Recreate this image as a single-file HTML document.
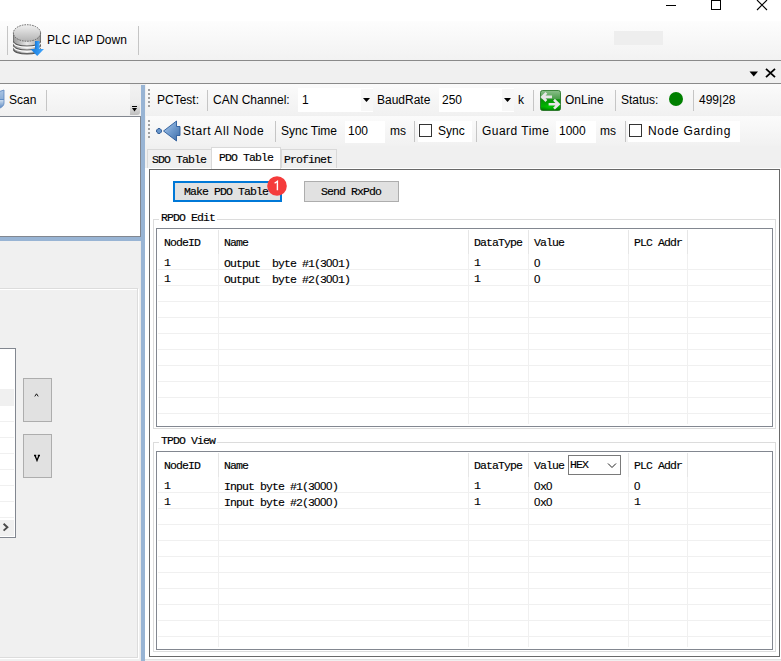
<!DOCTYPE html>
<html><head><meta charset="utf-8">
<style>
*{margin:0;padding:0;box-sizing:border-box}
html,body{width:781px;height:661px;overflow:hidden;background:#f0f0f0;position:relative;font-family:"Liberation Sans",sans-serif;font-size:12px;color:#000}
.a{position:absolute}
.t{position:absolute;white-space:nowrap;font-family:"Liberation Sans",sans-serif;font-size:12px;line-height:14px;color:#000}
.m{position:absolute;white-space:nowrap;font-family:"Liberation Mono",monospace;font-size:11.5px;letter-spacing:-0.9px;line-height:14px;color:#000;-webkit-text-stroke:0.15px #000}
.sep{position:absolute;width:1px;background:#c5c5c5}
.grip{position:absolute;width:2px;background:repeating-linear-gradient(to bottom,#a0a0a0 0,#a0a0a0 2px,transparent 2px,transparent 4px)}
.gl{position:absolute;background:#f0f0f0}
.z{font-family:"Liberation Sans",sans-serif;letter-spacing:-0.39px}
</style></head><body>

<!-- title bar -->
<div class="a" style="left:0;top:0;width:781px;height:21px;background:#fff"></div>
<div class="a" style="left:666px;top:5px;width:10px;height:1px;background:#000"></div>
<div class="a" style="left:711px;top:0;width:10px;height:10px;border:1px solid #000"></div>
<svg class="a" style="left:756px;top:-1px" width="12" height="12" viewBox="0 0 12 12"><path d="M1 1L11 11M11 1L1 11" stroke="#000" stroke-width="1.1"/></svg>

<!-- ribbon -->
<div class="a" style="left:0;top:21px;width:781px;height:39px;background:linear-gradient(#fdfdfd,#f2f2f2)"></div>
<div class="sep" style="left:7px;top:26px;height:29px"></div>
<div class="sep" style="left:138px;top:26px;height:29px"></div>
<div class="a" style="left:614px;top:31px;width:49px;height:14px;background:#eeeeee"></div>
<svg class="a" style="left:12px;top:24px" width="33" height="33" viewBox="0 0 33 33">
 <defs>
  <linearGradient id="dbg" x1="0" y1="0" x2="0" y2="1"><stop offset="0" stop-color="#f0f0f0"/><stop offset="1" stop-color="#b4b4b4"/></linearGradient>
  <linearGradient id="dbs" x1="0" y1="0" x2="1" y2="0"><stop offset="0" stop-color="#9a9a9a"/><stop offset="0.5" stop-color="#e8e8e8"/><stop offset="1" stop-color="#9a9a9a"/></linearGradient>
  <linearGradient id="arr" x1="0" y1="0" x2="1" y2="0"><stop offset="0" stop-color="#1578d8"/><stop offset="1" stop-color="#44a8ff"/></linearGradient>
 </defs>
 <path d="M1.5 9V25A13.5 4.5 0 0 0 28.5 25V9Z" fill="url(#dbs)" stroke="#6a6a6a" stroke-width="0.9"/>
 <path d="M1.5 17.5A13.5 4.5 0 0 0 28.5 17.5" fill="none" stroke="#505050" stroke-width="1.1"/>
 <path d="M1.5 18.8A13.5 4.5 0 0 0 28.5 18.8" fill="none" stroke="#fff" stroke-width="1.1"/>
 <path d="M1.5 21.5A13.5 4.5 0 0 0 28.5 21.5" fill="none" stroke="#505050" stroke-width="1.1"/>
 <path d="M1.5 22.8A13.5 4.5 0 0 0 28.5 22.8" fill="none" stroke="#fff" stroke-width="1.1"/>
 <path d="M1.5 25.5A13.5 4.5 0 0 0 28.5 25.5" fill="none" stroke="#505050" stroke-width="1.1"/>
 <ellipse cx="15" cy="9" rx="13.6" ry="8.3" fill="url(#dbg)" stroke="#5a5a5a" stroke-width="0.9" stroke-dasharray="1.6 1"/>
 <rect x="23" y="17" width="4.5" height="8.5" fill="url(#arr)"/>
 <path d="M18.5 25H32L25.2 32Z" fill="url(#arr)"/>
</svg>
<div class="t" style="left:47px;top:33px">PLC IAP Down</div>

<div class="a" style="left:0;top:60px;width:781px;height:1px;background:#8a8a8a"></div>
<svg class="a" style="left:749px;top:71px" width="10" height="6" viewBox="0 0 10 6"><path d="M0.5 0.5H9L4.75 5.5Z" fill="#000"/></svg>
<svg class="a" style="left:765px;top:68px" width="11" height="10" viewBox="0 0 11 10"><path d="M1 0.8L10 9.2M10 0.8L1 9.2" stroke="#000" stroke-width="1.8"/></svg>
<div class="a" style="left:0;top:83px;width:781px;height:1px;background:#8a8a8a"></div>

<!-- LEFT PANEL -->
<div class="a" style="left:0;top:84px;width:130px;height:31px;background:linear-gradient(#fbfbfb,#f1f1f1);border-radius:0 0 3px 0"></div>
<div class="a" style="left:130px;top:86px;width:10px;height:29px;background:linear-gradient(#f2f2f2 0,#ececec 60%,#bdbdbd 100%);border-radius:0 0 3px 0"></div>
<div class="a" style="left:132px;top:106px;width:5px;height:1px;background:#000"></div>
<svg class="a" style="left:132px;top:108px" width="6" height="4" viewBox="0 0 6 4"><path d="M0 0H5L2.5 3.5Z" fill="#000"/></svg>
<svg class="a" style="left:-12px;top:89px" width="17" height="21" viewBox="0 0 17 21">
 <defs><linearGradient id="sh" x1="0" y1="0" x2="0" y2="1"><stop offset="0" stop-color="#a9c4e4"/><stop offset="0.45" stop-color="#8eb0d8"/><stop offset="0.5" stop-color="#d6e4f2"/><stop offset="1" stop-color="#4d7dbc"/></linearGradient></defs>
 <path d="M1 6L16 1V14C16 17 13 19.5 8 20C4 19 1 16 1 13Z" fill="url(#sh)" stroke="#5a86c0" stroke-width="0.8"/>
 <path d="M1 10.5H16" stroke="#5f8cc4" stroke-width="1"/>
</svg>
<div class="t" style="left:9px;top:93px">Scan</div>
<div class="sep" style="left:46px;top:90px;height:21px"></div>

<div class="a" style="left:0;top:116px;width:141px;height:121px;background:#fff;border-top:1px solid #828790;border-right:1px solid #828790;border-bottom:1px solid #828790"></div>
<div class="a" style="left:0;top:237px;width:141px;height:4px;background:#98b4d4"></div>
<div class="a" style="left:141px;top:85px;width:4px;height:576px;background:#98b4d4"></div>
<div class="a" style="left:140px;top:241px;width:1px;height:420px;background:#e9e9e9"></div>

<!-- left groupbox -->
<div class="a" style="left:-2px;top:288px;width:140px;height:370px;border:1px solid #dcdcdc;box-shadow:1px 1px 0 #fff, inset 1px 1px 0 #fff"></div>
<!-- left grid -->
<div class="a" style="left:0;top:348px;width:16px;height:190px;background:#fff;border:1px solid #828790;border-left:none"></div>
<div class="a" style="left:0;top:389px;width:14px;height:17px;background:#f0f0f0"></div>
<div class="gl" style="left:0;top:421px;width:14px;height:1px"></div>
<div class="gl" style="left:0;top:437px;width:14px;height:1px"></div>
<div class="gl" style="left:0;top:453px;width:14px;height:1px"></div>
<div class="gl" style="left:0;top:469px;width:14px;height:1px"></div>
<div class="gl" style="left:0;top:485px;width:14px;height:1px"></div>
<div class="gl" style="left:0;top:501px;width:14px;height:1px"></div>
<div class="gl" style="left:0;top:517px;width:14px;height:1px"></div>
<div class="a" style="left:0;top:520px;width:14px;height:16px;background:#f0f0f0"></div>
<svg class="a" style="left:2px;top:522px" width="8" height="10" viewBox="0 0 8 10"><path d="M1.6 1.8L5.4 5.2L1.6 8.6" stroke="#4a4a4a" stroke-width="1.9" fill="none"/></svg>
<!-- up/down buttons -->
<div class="a" style="left:23px;top:378px;width:29px;height:44px;background:#e1e1e1;border:1px solid #adadad"></div>
<svg class="a" style="left:33px;top:392px" width="7" height="6" viewBox="0 0 7 6"><path d="M1.8 4.4L3.5 1.8L5.2 4.4" stroke="#000" stroke-width="0.9" fill="none"/></svg>
<div class="a" style="left:23px;top:434px;width:29px;height:44px;background:#e1e1e1;border:1px solid #adadad"></div>
<svg class="a" style="left:33px;top:454px" width="8" height="8" viewBox="0 0 8 8"><path d="M1 1.5H3.2M4.8 1.5H7M2 1.5L4 6.5L6 1.5" stroke="#000" stroke-width="1.3" fill="none"/></svg>

<!-- RIGHT PANEL toolbars -->
<div class="a" style="left:146px;top:84px;width:635px;height:31px;background:linear-gradient(#fbfbfb,#f1f1f1);border-radius:0 0 0 3px"></div>
<div class="a" style="left:146px;top:116px;width:635px;height:30px;background:linear-gradient(#fbfbfb,#f1f1f1);border-radius:0 0 0 3px"></div>
<div class="grip" style="left:148px;top:89px;height:18px"></div>
<div class="grip" style="left:148px;top:120px;height:18px"></div>

<div class="t" style="left:157px;top:93px">PCTest:</div>
<div class="sep" style="left:207px;top:90px;height:21px"></div>
<div class="t" style="left:213px;top:93px">CAN Channel:</div>
<div class="a" style="left:298px;top:88px;width:75px;height:24px;background:#fff"></div>
<div class="a" style="left:361px;top:89px;width:12px;height:22px;background:#f7f7f7"></div>
<svg class="a" style="left:363px;top:98px" width="7" height="4" viewBox="0 0 7 4"><path d="M0 0H7L3.5 4Z" fill="#000"/></svg>
<div class="t" style="left:302px;top:93px">1</div>
<div class="t" style="left:377px;top:93px">BaudRate</div>
<div class="a" style="left:439px;top:88px;width:75px;height:24px;background:#fff"></div>
<div class="a" style="left:502px;top:89px;width:12px;height:22px;background:#f7f7f7"></div>
<svg class="a" style="left:504px;top:98px" width="7" height="4" viewBox="0 0 7 4"><path d="M0 0H7L3.5 4Z" fill="#000"/></svg>
<div class="t" style="left:442px;top:93px">250</div>
<div class="t" style="left:518px;top:93px">k</div>
<div class="sep" style="left:533px;top:90px;height:21px"></div>
<svg class="a" style="left:540px;top:90px" width="21" height="21" viewBox="0 0 21 21">
 <defs><linearGradient id="gr" x1="0" y1="0" x2="0" y2="1"><stop offset="0" stop-color="#8cc08c"/><stop offset="0.42" stop-color="#4a9e4a"/><stop offset="0.46" stop-color="#078f07"/><stop offset="0.8" stop-color="#00b400"/><stop offset="1" stop-color="#006800"/></linearGradient>
 <radialGradient id="gg" cx="0.45" cy="0.7" r="0.5"><stop offset="0" stop-color="#00d000" stop-opacity="0.8"/><stop offset="1" stop-color="#00a000" stop-opacity="0"/></radialGradient></defs>
 <rect x="0.5" y="0.5" width="20" height="20" rx="2" fill="url(#gr)" stroke="#1c6e1c" stroke-width="0.8"/>
 <rect x="1" y="10" width="19" height="10" rx="2" fill="url(#gg)"/>
 <path d="M12 6.9H2.5M6.4 2.8L2.3 6.9L6.4 11" stroke="#e6e6e6" stroke-width="2.6" fill="none"/>
 <path d="M8.6 14.2H18.5M14 9.8L18.6 14.2L14 18.6" stroke="#e6e6e6" stroke-width="2.6" fill="none"/>
</svg>
<div class="t" style="left:565px;top:93px">OnLine</div>
<div class="sep" style="left:615px;top:90px;height:21px"></div>
<div class="t" style="left:621px;top:93px">Status:</div>
<div class="a" style="left:669px;top:92px;width:14px;height:14px;border-radius:50%;background:#008000"></div>
<div class="sep" style="left:693px;top:90px;height:21px"></div>
<div class="t" style="left:699px;top:93px">499|28</div>

<!-- row 2 -->
<svg class="a" style="left:155px;top:120px" width="26" height="22" viewBox="0 0 26 22">
 <defs><linearGradient id="ar" x1="0" y1="0" x2="1" y2="1"><stop offset="0" stop-color="#b4d0ee"/><stop offset="0.5" stop-color="#6f9acd"/><stop offset="1" stop-color="#3c6ca8"/></linearGradient></defs>
 <path d="M1.6 10L3 8.6H5L6.4 10V12L5 13.4H3L1.6 12Z" fill="#6a98cc" stroke="#234f8c" stroke-width="0.9"/>
 <path d="M8.5 11L21.5 1V6.5H25V15.5H21.5V21Z" fill="url(#ar)" stroke="#2a5a9a" stroke-width="0.9" stroke-linejoin="round"/>
</svg>
<div class="t" style="left:183px;top:124px;letter-spacing:0.56px">Start All Node</div>
<div class="sep" style="left:275px;top:121px;height:21px"></div>
<div class="t" style="left:281px;top:124px">Sync Time</div>
<div class="a" style="left:345px;top:121px;width:40px;height:22px;background:#fff"></div>
<div class="t" style="left:348px;top:124px">100</div>
<div class="t" style="left:390px;top:124px">ms</div>
<div class="sep" style="left:414px;top:121px;height:21px"></div>
<div class="a" style="left:418px;top:121px;width:54px;height:21px;background:#fff"></div>
<div class="a" style="left:419px;top:124px;width:13px;height:13px;border:1px solid #333;background:#fff"></div>
<div class="t" style="left:438px;top:124px">Sync</div>
<div class="sep" style="left:476px;top:121px;height:21px"></div>
<div class="t" style="left:482px;top:124px;letter-spacing:0.47px">Guard Time</div>
<div class="a" style="left:556px;top:121px;width:40px;height:22px;background:#fff"></div>
<div class="t" style="left:559px;top:124px">1000</div>
<div class="t" style="left:600px;top:124px">ms</div>
<div class="sep" style="left:625px;top:121px;height:21px"></div>
<div class="a" style="left:628px;top:121px;width:112px;height:21px;background:#fff"></div>
<div class="a" style="left:629px;top:124px;width:13px;height:13px;border:1px solid #333;background:#fff"></div>
<div class="t" style="left:648px;top:124px;letter-spacing:0.69px">Node Garding</div>

<!-- tabs -->
<div class="a" style="left:145px;top:168px;width:636px;height:491px;background:#fff"></div>
<div class="a" style="left:145px;top:659px;width:636px;height:1px;background:#e3e3e3"></div>
<div class="a" style="left:147px;top:149px;width:65px;height:19px;background:#f0f0f0;border:1px solid #d9d9d9;border-bottom:none"></div>
<div class="m" style="left:152px;top:153px">SDO Table</div>
<div class="a" style="left:281px;top:149px;width:56px;height:19px;background:#f0f0f0;border:1px solid #d9d9d9;border-bottom:none"></div>
<div class="m" style="left:284px;top:153px">Profinet</div>
<!-- tab page -->
<div class="a" style="left:149px;top:169px;width:631px;height:488px;background:#fff;border:1px solid #696969"></div>
<div class="a" style="left:211px;top:147px;width:70px;height:22px;background:#fff;border:1px solid #d9d9d9;border-bottom:none"></div>
<div class="m" style="left:219px;top:151px">PDO Table</div>

<!-- buttons -->
<div class="a" style="left:173px;top:181px;width:109px;height:21px;background:#e1e1e1;border:2px solid #0078d7"></div>
<div class="m" style="left:184px;top:185px">Make PDO Table</div>
<svg class="a" style="left:267px;top:176px" width="20" height="20" viewBox="0 0 20 20"><circle cx="10" cy="10" r="9.8" fill="#f53b3b"/><path d="M7.6 7.3L10.4 5.3V14.2" stroke="#fff" stroke-width="1.4" fill="none" stroke-linejoin="miter"/></svg>
<div class="a" style="left:304px;top:181px;width:95px;height:21px;background:#e1e1e1;border:1px solid #adadad"></div>
<div class="m" style="left:321px;top:185px">Send RxPdo</div>

<!-- RPDO group -->
<div class="a" style="left:153px;top:219px;width:623px;height:210px;border:1px solid #dcdcdc"></div>
<div class="a" style="left:159px;top:213px;width:58px;height:12px;background:#fff"></div>
<div class="m" style="left:161px;top:211px">RPDO Edit</div>
<div class="a" style="left:156px;top:228px;width:617px;height:199px;border:1px solid #828790"></div>

<!-- TPDO group -->
<div class="a" style="left:153px;top:442px;width:623px;height:210px;border:1px solid #dcdcdc"></div>
<div class="a" style="left:159px;top:436px;width:58px;height:12px;background:#fff"></div>
<div class="m" style="left:161px;top:434px">TPDO View</div>
<div class="a" style="left:156px;top:451px;width:617px;height:199px;border:1px solid #828790"></div>

<!--GRIDS-->
<div class="a" style="left:218px;top:230px;width:1px;height:24px;background:#e6e6e6"></div>
<div class="a" style="left:468px;top:230px;width:1px;height:24px;background:#e6e6e6"></div>
<div class="a" style="left:528px;top:230px;width:1px;height:24px;background:#e6e6e6"></div>
<div class="a" style="left:628px;top:230px;width:1px;height:24px;background:#e6e6e6"></div>
<div class="a" style="left:687px;top:230px;width:1px;height:24px;background:#e6e6e6"></div>
<div class="gl" style="left:158px;top:269px;width:613px;height:1px"></div>
<div class="gl" style="left:158px;top:285px;width:613px;height:1px"></div>
<div class="gl" style="left:158px;top:301px;width:613px;height:1px"></div>
<div class="gl" style="left:158px;top:317px;width:613px;height:1px"></div>
<div class="gl" style="left:158px;top:333px;width:613px;height:1px"></div>
<div class="gl" style="left:158px;top:349px;width:613px;height:1px"></div>
<div class="gl" style="left:158px;top:365px;width:613px;height:1px"></div>
<div class="gl" style="left:158px;top:381px;width:613px;height:1px"></div>
<div class="gl" style="left:158px;top:397px;width:613px;height:1px"></div>
<div class="gl" style="left:158px;top:413px;width:613px;height:1px"></div>
<div class="gl" style="left:218px;top:254px;width:1px;height:170px"></div>
<div class="gl" style="left:468px;top:254px;width:1px;height:170px"></div>
<div class="gl" style="left:528px;top:254px;width:1px;height:170px"></div>
<div class="gl" style="left:628px;top:254px;width:1px;height:170px"></div>
<div class="gl" style="left:687px;top:254px;width:1px;height:170px"></div>
<div class="m" style="left:164px;top:236px">NodeID</div>
<div class="m" style="left:224px;top:236px">Name</div>
<div class="m" style="left:474px;top:236px">DataType</div>
<div class="m" style="left:534px;top:236px">Value</div>
<div class="m" style="left:634px;top:236px">PLC Addr</div>
<div class="m" style="left:164px;top:256px">1</div>
<div class="m" style="left:224px;top:256px">Output&nbsp; byte #1(3<span class="z">0</span><span class="z">0</span>1)</div>
<div class="m" style="left:474px;top:256px">1</div>
<div class="m" style="left:534px;top:256px"><span class="z">0</span></div>
<div class="m" style="left:164px;top:272px">1</div>
<div class="m" style="left:224px;top:272px">Output&nbsp; byte #2(3<span class="z">0</span><span class="z">0</span>1)</div>
<div class="m" style="left:474px;top:272px">1</div>
<div class="m" style="left:534px;top:272px"><span class="z">0</span></div>
<div class="a" style="left:218px;top:453px;width:1px;height:24px;background:#e6e6e6"></div>
<div class="a" style="left:468px;top:453px;width:1px;height:24px;background:#e6e6e6"></div>
<div class="a" style="left:528px;top:453px;width:1px;height:24px;background:#e6e6e6"></div>
<div class="a" style="left:628px;top:453px;width:1px;height:24px;background:#e6e6e6"></div>
<div class="a" style="left:687px;top:453px;width:1px;height:24px;background:#e6e6e6"></div>
<div class="gl" style="left:158px;top:492px;width:613px;height:1px"></div>
<div class="gl" style="left:158px;top:508px;width:613px;height:1px"></div>
<div class="gl" style="left:158px;top:524px;width:613px;height:1px"></div>
<div class="gl" style="left:158px;top:540px;width:613px;height:1px"></div>
<div class="gl" style="left:158px;top:556px;width:613px;height:1px"></div>
<div class="gl" style="left:158px;top:572px;width:613px;height:1px"></div>
<div class="gl" style="left:158px;top:588px;width:613px;height:1px"></div>
<div class="gl" style="left:158px;top:604px;width:613px;height:1px"></div>
<div class="gl" style="left:158px;top:620px;width:613px;height:1px"></div>
<div class="gl" style="left:158px;top:636px;width:613px;height:1px"></div>
<div class="gl" style="left:218px;top:477px;width:1px;height:170px"></div>
<div class="gl" style="left:468px;top:477px;width:1px;height:170px"></div>
<div class="gl" style="left:528px;top:477px;width:1px;height:170px"></div>
<div class="gl" style="left:628px;top:477px;width:1px;height:170px"></div>
<div class="gl" style="left:687px;top:477px;width:1px;height:170px"></div>
<div class="m" style="left:164px;top:459px">NodeID</div>
<div class="m" style="left:224px;top:459px">Name</div>
<div class="m" style="left:474px;top:459px">DataType</div>
<div class="m" style="left:534px;top:459px">Value</div>
<div class="m" style="left:634px;top:459px">PLC Addr</div>
<div class="m" style="left:164px;top:479px">1</div>
<div class="m" style="left:224px;top:479px">Input byte #1(3<span class="z">0</span><span class="z">0</span><span class="z">0</span>)</div>
<div class="m" style="left:474px;top:479px">1</div>
<div class="m" style="left:534px;top:479px"><span class="z">0</span>x<span class="z">0</span></div>
<div class="m" style="left:634px;top:479px"><span class="z">0</span></div>
<div class="m" style="left:164px;top:495px">1</div>
<div class="m" style="left:224px;top:495px">Input byte #2(3<span class="z">0</span><span class="z">0</span><span class="z">0</span>)</div>
<div class="m" style="left:474px;top:495px">1</div>
<div class="m" style="left:534px;top:495px"><span class="z">0</span>x<span class="z">0</span></div>
<div class="m" style="left:634px;top:495px">1</div>
<div class="a" style="left:568px;top:455px;width:53px;height:20px;background:#fff;border:1px solid #7a7a7a"></div>
<div class="m" style="left:570px;top:458px">HEX</div>
<svg class="a" style="left:607px;top:462px" width="10" height="7" viewBox="0 0 10 7"><path d="M1 1.5L5 5.5L9 1.5" stroke="#222" stroke-width="1" fill="none"/></svg>

<!--/GRIDS-->
</body></html>
